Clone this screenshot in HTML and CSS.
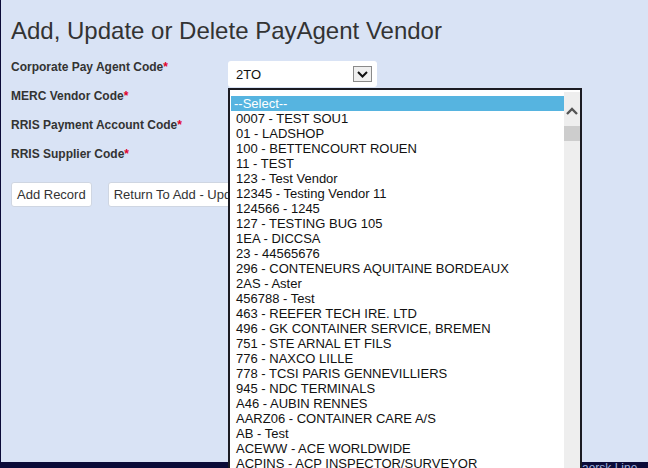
FILE: index.html
```html
<!DOCTYPE html>
<html>
<head>
<meta charset="utf-8">
<link rel="stylesheet" href="styles.css">
</head>
<body>
<div class="page">
  <h1 class="title">Add, Update or Delete PayAgent Vendor</h1>
  <div class="form">
    <div class="label">Corporate Pay Agent Code<span class="req">*</span></div>
    <div class="field">
      <div class="select">
        <span class="select-value">2TO</span>
        <span class="select-btn"><svg width="11" height="7" viewBox="0 0 11 7"><path d="M1 1 L5.5 5.5 L10 1" fill="none" stroke="#111" stroke-width="2"/></svg></span>
      </div>
    </div>
    <div class="label">MERC Vendor Code<span class="req">*</span></div>
    <div class="field"></div>
    <div class="label">RRIS Payment Account Code<span class="req">*</span></div>
    <div class="field"></div>
    <div class="label">RRIS Supplier Code<span class="req">*</span></div>
    <div class="field"></div>
  </div>
  <div class="buttons">
    <button class="btn">Add Record</button>
    <button class="btn">Return To Add - Update - Delete</button>
  </div>

  <div class="listbox">
    <ul class="options">
      <li class="selected">--Select--</li>
      <li>0007 - TEST SOU1</li>
      <li>01 - LADSHOP</li>
      <li>100 - BETTENCOURT ROUEN</li>
      <li>11 - TEST</li>
      <li>123 - Test Vendor</li>
      <li>12345 - Testing Vendor 11</li>
      <li>124566 - 1245</li>
      <li>127 - TESTING BUG 105</li>
      <li>1EA - DICCSA</li>
      <li>23 - 44565676</li>
      <li>296 - CONTENEURS AQUITAINE BORDEAUX</li>
      <li>2AS - Aster</li>
      <li>456788 - Test</li>
      <li>463 - REEFER TECH IRE. LTD</li>
      <li>496 - GK CONTAINER SERVICE, BREMEN</li>
      <li>751 - STE ARNAL ET FILS</li>
      <li>776 - NAXCO LILLE</li>
      <li>778 - TCSI PARIS GENNEVILLIERS</li>
      <li>945 - NDC TERMINALS</li>
      <li>A46 - AUBIN RENNES</li>
      <li>AARZ06 - CONTAINER CARE A/S</li>
      <li>AB - Test</li>
      <li>ACEWW - ACE WORLDWIDE</li>
      <li>ACPINS - ACP INSPECTOR/SURVEYOR</li>
    </ul>
    <div class="scrollbar">
      <span class="scroll-up"><svg width="12" height="8" viewBox="0 0 12 8"><path d="M1 7 L6 2 L11 7" fill="none" stroke="#555" stroke-width="2.4"/></svg></span>
      <span class="scroll-thumb"></span>
    </div>
  </div>
</div>
<footer class="footer">Maersk Line</footer>
</body>
</html>
```

FILE: styles.css
```css
html, body {
  margin: 0;
  padding: 0;
}
body {
  width: 648px;
  height: 468px;
  overflow: hidden;
  font-family: "Liberation Sans", Arial, sans-serif;
  color: #333;
  background: #0b0b38;
}
.page {
  position: relative;
  height: 462px;
  background: #d9e3f5;
  border-left: 1px solid #0b0b38;
  box-sizing: border-box;
  padding-left: 10px;
  padding-top: 17px;
}
.title {
  margin: 0;
  font-size: 24px;
  font-weight: normal;
  line-height: 27px;
  color: #333;
}
.form {
  margin-top: 15px;
  display: grid;
  grid-template-columns: 217px 1fr;
  grid-auto-rows: 29px;
}
.label {
  font-size: 12px;
  font-weight: bold;
  line-height: 14px;
  padding-top: 1px;
  color: #333;
}
.req {
  color: #e0002a;
}
.field {
  padding-top: 2px;
}
.select {
  width: 149px;
  height: 26px;
  box-sizing: border-box;
  background: #fff;
  border-radius: 3px;
  display: flex;
  align-items: center;
  justify-content: space-between;
  padding-left: 8px;
  padding-right: 5px;
}
.select-value {
  font-size: 13px;
  color: #111;
}
.select-btn {
  width: 19px;
  height: 16px;
  box-sizing: border-box;
  border: 1px solid #8a8a8a;
  background: #efefef;
  display: flex;
  align-items: center;
  justify-content: center;
}
.buttons {
  margin-top: 7px;
  display: flex;
  gap: 16px;
}
.btn {
  font-family: "Liberation Sans", Arial, sans-serif;
  font-size: 13px;
  color: #333;
  background: #fff;
  border: 1px solid #cfd6e2;
  border-radius: 3px;
  height: 25px;
  padding: 0 5px;
  white-space: nowrap;
}
.listbox {
  position: absolute;
  left: 227px;
  top: 88px;
  width: 354px;
  height: 380px;
  box-sizing: border-box;
  border: 2px solid #1b1b22;
  border-bottom: none;
  background: #fff;
  display: flex;
  overflow: hidden;
  z-index: 5;
}
.options {
  list-style: none;
  margin: 0;
  padding: 6px 0 0 1px;
  flex: 1;
  font-size: 13px;
  line-height: 15px;
  color: #111;
}
.options li {
  padding-left: 5px;
  height: 15px;
  white-space: nowrap;
}
.options li.selected {
  background: #56b4e0;
  color: #fff;
  padding-left: 3px;
}
.scrollbar {
  width: 16px;
  background: #eeeeee;
  margin-top: 2px;
  display: flex;
  flex-direction: column;
  align-items: center;
}
.scroll-up {
  margin-top: 15px;
  height: 9px;
  display: flex;
}
.scroll-thumb {
  margin-top: 10px;
  width: 16px;
  height: 15px;
  background: #cdcdcd;
}
.footer {
  height: 6px;
  overflow: hidden;
  background: #0b0b38;
  color: #9fb0dc;
  font-size: 12px;
  line-height: 13px;
  padding-left: 572px;
  white-space: nowrap;
}
```
